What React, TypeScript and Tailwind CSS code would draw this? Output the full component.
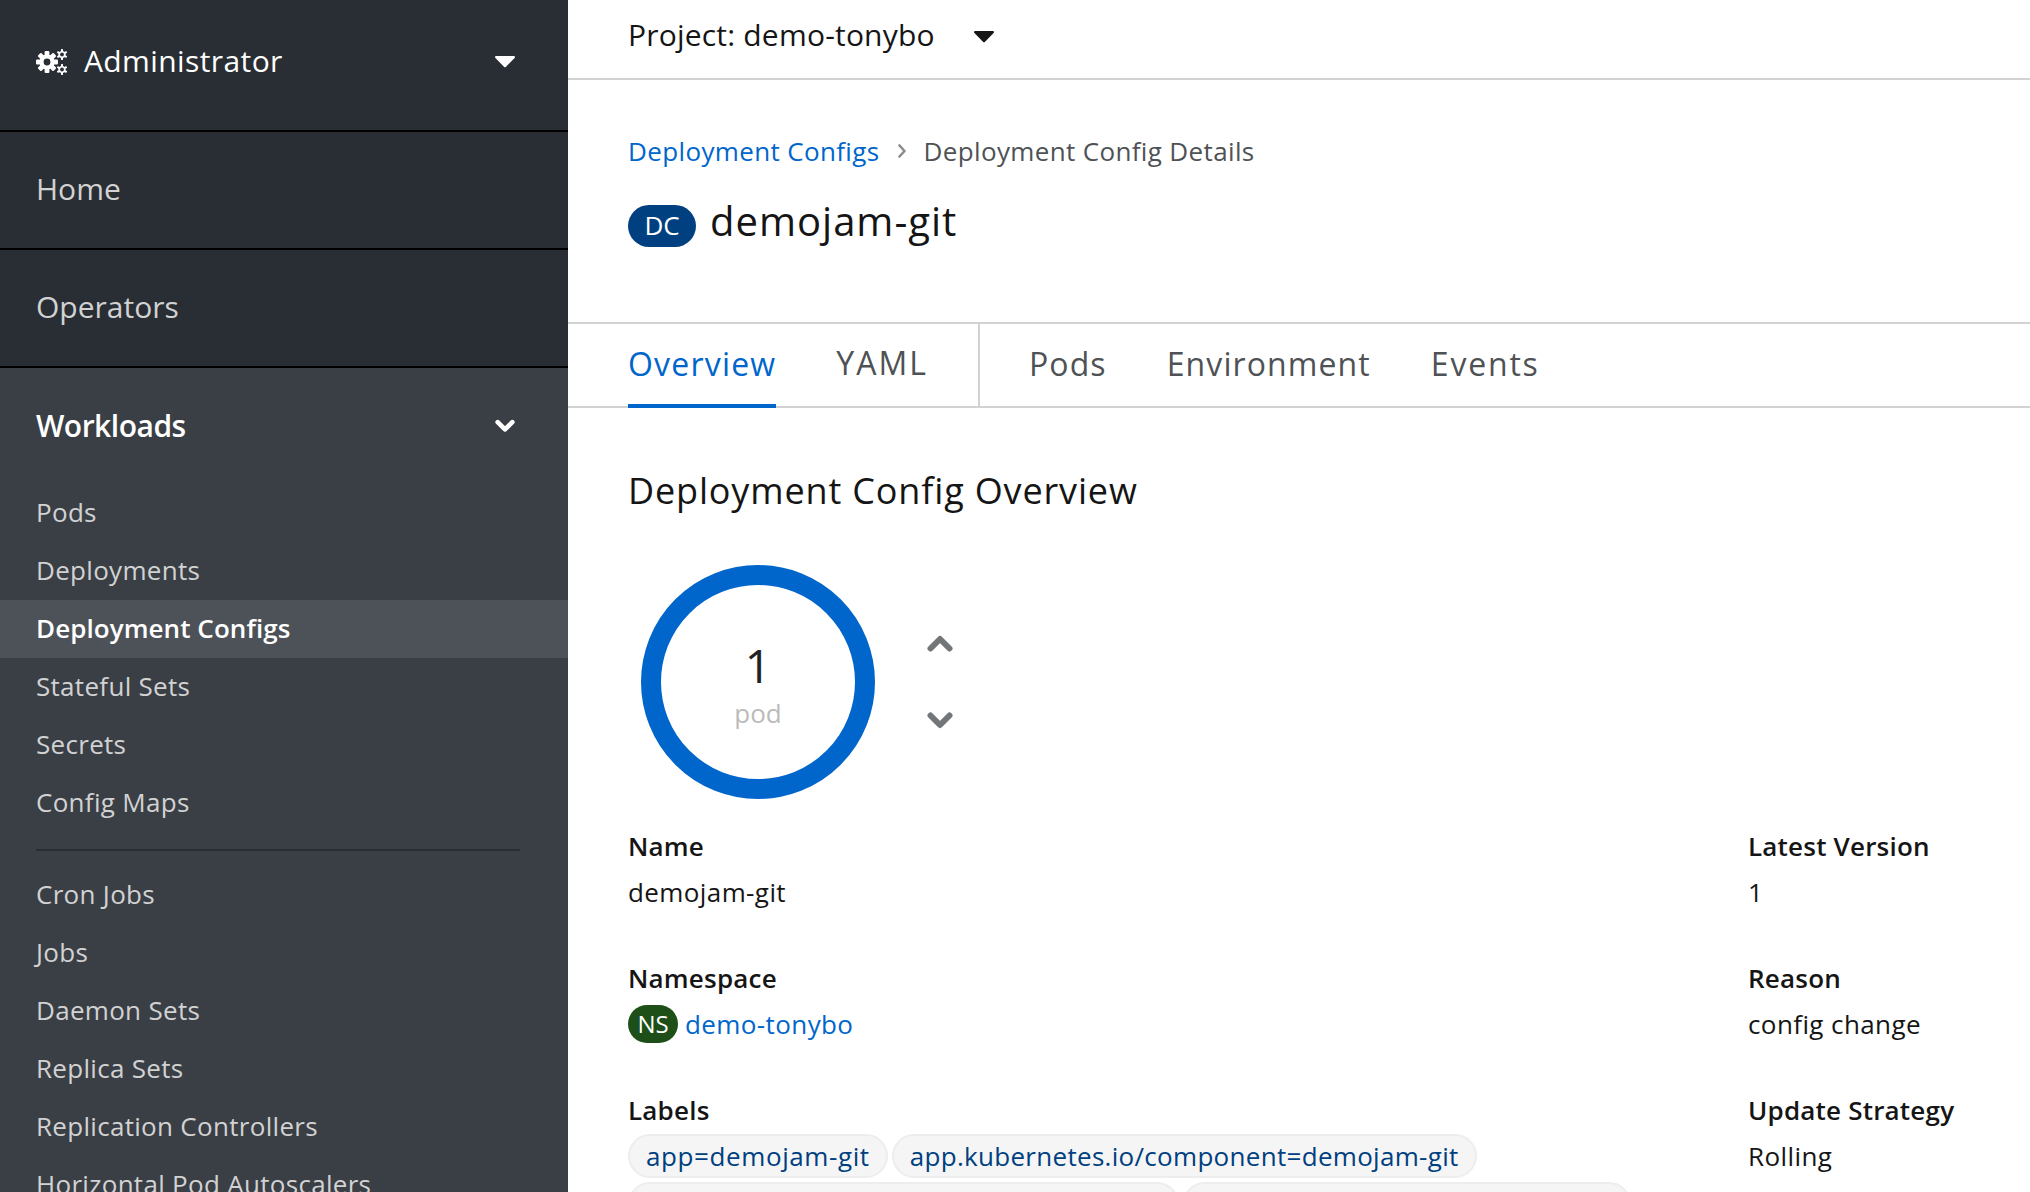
import React from "react";

const F = "font-['Open_Sans','Noto_Sans',sans-serif]";

function Caret({ cls }: { cls: string }) {
  return (
    <svg viewBox="0 0 20 12" className={cls} fill="currentColor">
      <path d="M1.2 0h17.6c1 0 1.5 1.2.8 1.9L10.8 10.9c-.5.5-1.1.5-1.6 0L.4 1.9C-.3 1.2.2 0 1.2 0z" />
    </svg>
  );
}

function Chevron({ up, cls }: { up?: boolean; cls: string }) {
  return (
    <svg viewBox="0 0 26 17" className={cls} fill="none" stroke="currentColor" strokeWidth="6" strokeLinecap="round" strokeLinejoin="round">
      {up ? <path d="M3.5 13.5 L13 4 L22.5 13.5" /> : <path d="M3.5 3.5 L13 13 L22.5 3.5" />}
    </svg>
  );
}

function Gears() {
  return (
    <svg viewBox="0 0 32 26" className="w-[32px] h-[26px] text-white mb-[1px]" fill="currentColor">
      <g>
        <circle cx="11" cy="13" r="7.5" />
        {[0, 45, 90, 135].map((a) => (
          <rect key={a} x="8.6" y="2" width="4.8" height="22" rx="1" transform={`rotate(${a} 11 13)`} />
        ))}
        <circle cx="11" cy="13" r="3.4" fill="#292e34" />
      </g>
      {[[26, 5.5], [26, 20.5]].map(([x, y]) => (
        <g key={y}>
          <circle cx={x} cy={y} r="3.6" />
          {[0, 60, 120].map((a) => (
            <rect key={a} x={x - 1} y={y - 5.4} width="2" height="10.8" transform={`rotate(${a} ${x} ${y})`} />
          ))}
          <circle cx={x} cy={y} r="1.9" fill="#292e34" />
        </g>
      ))}
    </svg>
  );
}

function SubItem({ children, active }: { children: string; active?: boolean }) {
  return (
    <div className={`h-[58px] shrink-0 flex items-center pl-[36px] pb-[2px] text-[26px] whitespace-nowrap ${active ? "bg-[#4d5258] text-white font-semibold tracking-[0.07px]" : "text-[#d2d2d2] tracking-[0.3px]"}`}>
      {children}
    </div>
  );
}

function Field({ label, children }: { label: string; children: React.ReactNode }) {
  return (
    <div className="h-[132px] shrink-0">
      <div className="h-[46px] flex items-center text-[26px] font-semibold text-[#151515] tracking-[0.2px]">{label}</div>
      <div className="h-[46px] flex items-center text-[26px] text-[#151515] tracking-[0.4px]">{children}</div>
    </div>
  );
}

function Pill({ children, cls }: { children: string; cls: string }) {
  return (
    <span className={`h-[44px] px-[16px] rounded-[22px] border-2 border-[#ededed] bg-[#f5f5f5] text-[#004080] text-[26px] flex items-center whitespace-nowrap ${cls}`}>
      {children}
    </span>
  );
}

export default function App() {
  return (
    <div className={`${F} w-[2030px] h-[1192px] overflow-hidden flex bg-white`}>
      <aside className="w-[568px] shrink-0 h-full overflow-hidden flex flex-col bg-[#3a3f46]">
        <div className="h-[132px] shrink-0 bg-[#292e34] border-b-2 border-black flex items-center pl-[36px] pr-[53px] pb-[6px] text-white">
          <Gears />
          <span className="ml-[16px] mb-[4px] text-[30px] font-medium tracking-[0.4px]">Administrator</span>
          <Caret cls="ml-auto w-[20px] h-[12px] text-white" />
        </div>
        <div className="h-[118px] shrink-0 bg-[#292e34] border-b-2 border-black flex items-center pl-[36px] pb-[3px] text-[30px] text-[#d2d2d2]">Home</div>
        <div className="h-[118px] shrink-0 bg-[#292e34] border-b-2 border-black flex items-center pl-[36px] pb-[3px] text-[30px] text-[#d2d2d2]">Operators</div>
        <div className="h-[116px] shrink-0 flex items-center pl-[36px] pr-[53px] text-[30px] font-semibold text-white tracking-[-0.5px]">
          <span className="mb-[2px]">Workloads</span>
          <Chevron cls="ml-auto w-[20px] h-[14px] text-white" />
        </div>
        <div className="flex flex-col">
          <SubItem>Pods</SubItem>
          <SubItem>Deployments</SubItem>
          <SubItem active>Deployment Configs</SubItem>
          <SubItem>Stateful Sets</SubItem>
          <SubItem>Secrets</SubItem>
          <SubItem>Config Maps</SubItem>
          <div className="h-[2px] bg-[#292e34] ml-[36px] mr-[48px] mt-[17px] mb-[15px] shrink-0" />
          <SubItem>Cron Jobs</SubItem>
          <SubItem>Jobs</SubItem>
          <SubItem>Daemon Sets</SubItem>
          <SubItem>Replica Sets</SubItem>
          <SubItem>Replication Controllers</SubItem>
          <SubItem>Horizontal Pod Autoscalers</SubItem>
        </div>
      </aside>

      <main className="flex-1 min-w-0 h-full overflow-hidden flex flex-col">
        <div className="h-[80px] shrink-0 border-b-2 border-[#d2d2d2] flex items-center pl-[60px] pb-[6px] text-[30px] text-[#151515]">
          <span className="mb-[3px] tracking-[0.2px]">Project: demo-tonybo</span>
          <Caret cls="ml-[39px] mt-[1px] w-[20px] h-[12px] text-[#151515]" />
        </div>
        <div className="h-[244px] shrink-0 border-b-2 border-[#d2d2d2] pl-[60px] pt-[49px]">
          <div className="flex items-center h-[44px] text-[26px] tracking-[0.36px]">
            <span className="text-[#06c]">Deployment Configs</span>
            <svg viewBox="0 0 8 14" className="mx-[17px] w-[10px] h-[14px] text-[#8a8d90]" fill="none" stroke="currentColor" strokeWidth="2.6" strokeLinecap="round" strokeLinejoin="round">
              <path d="M1.5 1.5 L6.5 7 L1.5 12.5" />
            </svg>
            <span className="text-[#4f5255]">Deployment Config Details</span>
          </div>
          <div className="flex items-center mt-[19px] h-[58px]">
            <span className="w-[68px] h-[42px] mt-[9px] rounded-[21px] bg-[#004080] text-white text-[26px] flex items-center justify-center">DC</span>
            <span className="ml-[14px] text-[40px] tracking-[1px] text-[#151515]">demojam-git</span>
          </div>
        </div>
        <div className="h-[84px] shrink-0 border-b-2 border-[#d2d2d2] flex pl-[60px] text-[32px] tracking-[1.1px] text-[#4f5255]">
          <div className="flex gap-[60px] pr-[50px] border-r-2 border-[#d2d2d2]">
            <div className="flex items-center text-[#06c] border-b-4 border-[#06c] h-[84px] tracking-[1.2px]">Overview</div>
            <div className="flex items-center pb-[4px] tracking-[2px]">YAML</div>
          </div>
          <div className="flex gap-[60px] pl-[49px]">
            <div className="flex items-center pb-[3px]">Pods</div>
            <div className="flex items-center pb-[3px]">Environment</div>
            <div className="flex items-center pb-[3px] tracking-[1.8px]">Events</div>
          </div>
        </div>
        <div className="flex-1 min-h-0 pl-[60px] pt-[58px]">
          <h2 className="text-[36px] leading-[50px] tracking-[0.85px] text-[#151515]">Deployment Config Overview</h2>
          <div className="flex items-center mt-[48px] pl-[13px] h-[236px]">
            <div className="w-[234px] h-[234px] rounded-full border-[20px] border-[#06c] flex flex-col items-center justify-center">
              <span className="text-[46px] leading-[52px] text-[#222] mt-[4px]">1</span>
              <span className="text-[26px] leading-[32px] mt-[6px] text-[#bbb]">pod</span>
            </div>
            <div className="ml-[52px] flex flex-col gap-[60px] text-[#737679]">
              <Chevron up cls="w-[26px] h-[17px]" />
              <Chevron cls="w-[26px] h-[17px]" />
            </div>
          </div>
          <div className="flex mt-[23px]">
            <div className="w-[1120px] shrink-0 flex flex-col">
              <Field label="Name">demojam-git</Field>
              <Field label="Namespace">
                <span className="w-[50px] h-[38px] rounded-[19px] bg-[#1e4f18] text-white flex items-center justify-center text-[24px] tracking-normal">NS</span>
                <span className="ml-[7px] text-[#06c]">demo-tonybo</span>
              </Field>
              <div className="h-[46px] flex items-center text-[26px] font-semibold text-[#151515] tracking-[0.2px]">Labels</div>
              <div className="flex gap-[4px] mt-[1px]">
                <Pill cls="tracking-[0.6px]">app=demojam-git</Pill>
                <Pill cls="tracking-[0.3px]">app.kubernetes.io/component=demojam-git</Pill>
              </div>
              <div className="flex gap-[4px] mt-[4px]">
                <Pill cls="tracking-[0.4px]">app.kubernetes.io/instance=demojam-git</Pill>
                <Pill cls="tracking-[0.4px]">app.openshift.io/runtime=nodejs</Pill>
              </div>
            </div>
            <div className="flex flex-col">
              <Field label="Latest Version">1</Field>
              <Field label="Reason">config change</Field>
              <Field label="Update Strategy">Rolling</Field>
            </div>
          </div>
        </div>
      </main>
    </div>
  );
}
